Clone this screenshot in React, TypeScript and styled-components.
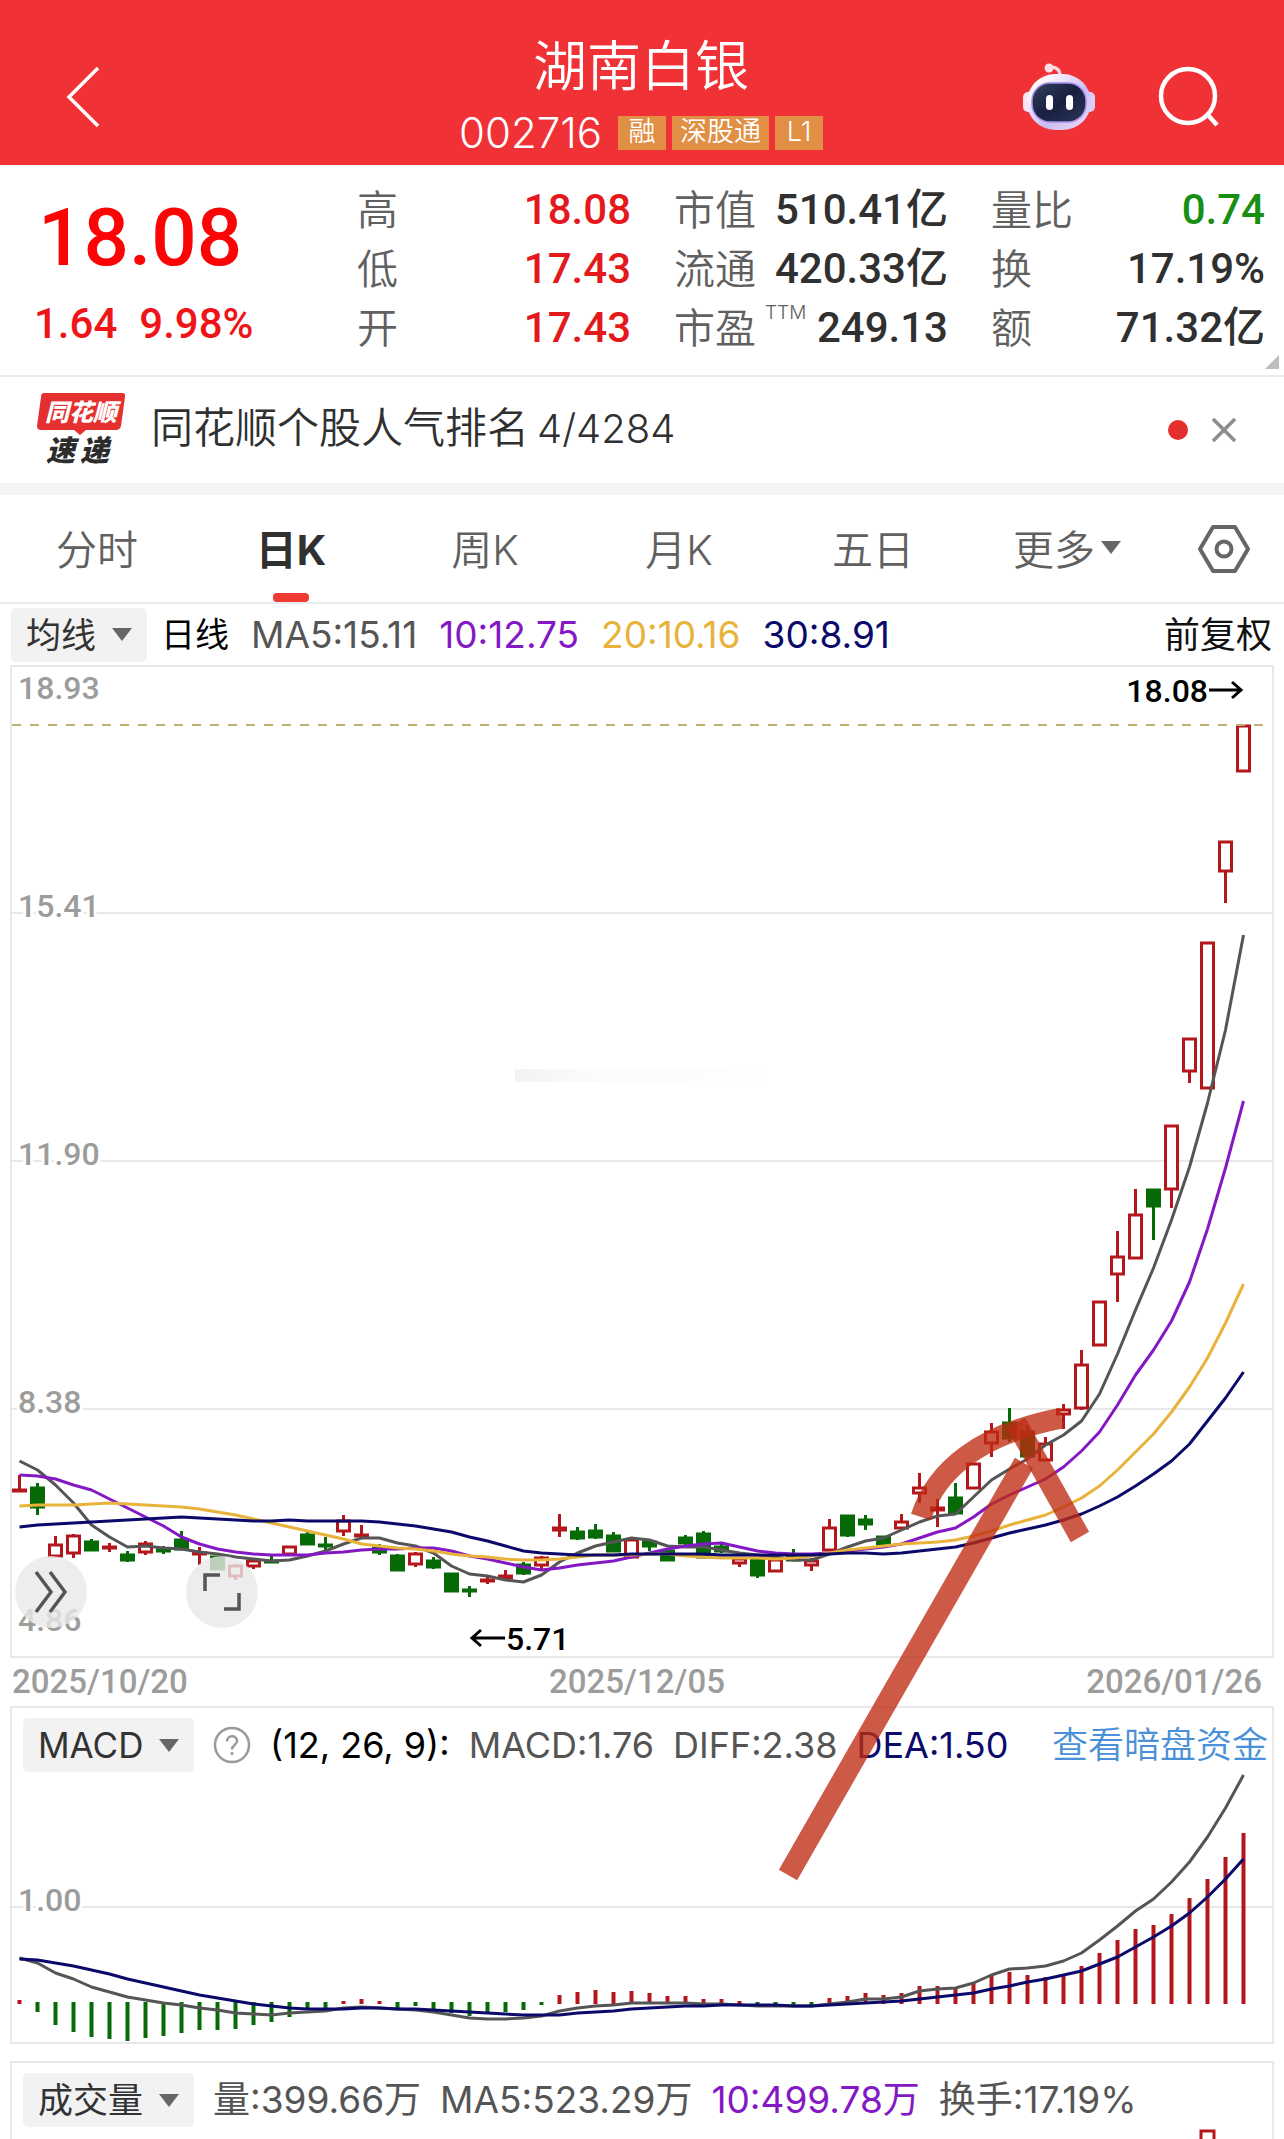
import React from "react";
import styled, { createGlobalStyle } from "styled-components";

const RED = "#b3171b";
const GREEN = "#066a06";
const NAVY = "#0b0a6b";
const PURPLE = "#8418c4";
const AMBER = "#e8b33a";
const GRAY = "#555555";

const DIGITS = 'Roboto, "Noto Sans CJK SC", sans-serif';
const UI = 'Inter, "Noto Sans CJK SC", sans-serif';

const Global = createGlobalStyle`
  * { box-sizing: border-box; }
  body { margin: 0; background: #fff; color: #333; font-family: ${UI}; }
  button, select { font: inherit; color: inherit; border: 0; background: none; padding: 0; margin: 0; cursor: pointer; }
  svg { display: block; }
`;

const Page = styled.main`
  width: 100%;
  overflow: hidden;
`;

/* ---------- header ---------- */
const Header = styled.header`
  display: grid;
  grid-template-columns: 1fr auto 1fr;
  align-items: center;
  height: 165px;
  padding: 28px 62px 0 60px;
  background: #f03237;
  color: #fff;
`;
const HeaderCenter = styled.div`
  display: flex;
  flex-direction: column;
  align-items: center;
`;
const StockName = styled.h1`
  margin: 0;
  font-size: 54px;
  line-height: 72px;
  font-weight: 350;
`;
const CodeRow = styled.div`
  display: flex;
  align-items: center;
  gap: 6px;
  height: 60px;
  font-size: 42px;
  font-weight: 300;
`;
const Code = styled.span`
  margin-right: 10px;
`;
const Tag = styled.span`
  min-width: 48px;
  padding: 0 8px;
  height: 34px;
  line-height: 32px;
  font-size: 27px;
  font-weight: 350;
  text-align: center;
  background: #e08f45;
`;
const HeaderActions = styled.div`
  display: flex;
  justify-content: flex-end;
  align-items: center;
  gap: 60px;
`;
const IconButton = styled.button`
  display: inline-flex;
  align-items: center;
  justify-content: center;
  justify-self: start;
`;

/* ---------- quote summary ---------- */
const Quote = styled.section`
  position: relative;
  display: grid;
  grid-template-columns: 314px 1fr 1fr 1fr;
  column-gap: 43px;
  height: 212px;
  padding: 15px 19px 0 0;
  border-bottom: 2px solid #ececec;
`;
const PriceBlock = styled.div`
  padding-left: 34px;
  color: #fb0406;
  font-family: ${DIGITS};
  font-weight: 500;
  white-space: nowrap;
`;
const Price = styled.div`
  margin-top: 11px;
  padding-left: 4px;
  font-size: 80px;
  line-height: 94px;
`;
const Change = styled.div`
  display: flex;
  gap: 22px;
  margin-top: 14px;
  font-size: 42px;
  line-height: 50px;
  color: #ef1418;
`;
const Stats = styled.dl`
  margin: 0;
`;
const Stat = styled.div`
  display: flex;
  align-items: center;
  justify-content: space-between;
  height: 59px;
  white-space: nowrap;
`;
const StatLabel = styled.dt`
  display: flex;
  font-size: 41px;
  font-weight: 350;
  line-height: 56px;
  color: #606060;
`;
const Superscript = styled.sup`
  margin-left: 9px;
  font-size: 19px;
  line-height: 26px;
`;
const StatValue = styled.dd<{ $tone?: string }>`
  margin: 0;
  font-family: ${DIGITS};
  font-size: 42px;
  font-weight: 500;
  line-height: 56px;
  color: ${(p) => p.$tone ?? "#303030"};
`;
const Corner = styled.span`
  position: absolute;
  right: 5px;
  bottom: 6px;
  border-style: solid;
  border-width: 0 0 14px 14px;
  border-color: transparent transparent #bdbdbd transparent;
`;

/* ---------- notice ---------- */
const Notice = styled.section`
  display: flex;
  align-items: center;
  height: 106px;
  padding: 0 46px 0 36px;
`;
const NoticeText = styled.a`
  flex: 1;
  margin-left: 25px;
  padding-bottom: 4px;
  font-size: 42px;
  line-height: 60px;
  font-weight: 350;
  color: #303030;
  text-decoration: none;
`;
const Rank = styled.span`
  margin-left: 8px;
  font-size: 40px;
`;
const Dot = styled.span`
  width: 20px;
  height: 20px;
  margin-right: 22px;
  border-radius: 50%;
  background: #e52e2e;
`;
const Band = styled.div`
  height: 12px;
  background: #f4f4f4;
`;

/* ---------- period tabs ---------- */
const Tabs = styled.nav`
  display: flex;
  height: 109px;
  border-bottom: 2px solid #ececec;
`;
const Tab = styled.button<{ $active?: boolean }>`
  position: relative;
  flex: 1;
  display: flex;
  align-items: center;
  justify-content: center;
  gap: 6px;
  padding-bottom: 3px;
  font-size: 41px;
  font-weight: ${(p) => (p.$active ? 700 : 350)};
  color: ${(p) => (p.$active ? "#303030" : "#606060")};
  &::after {
    content: "";
    display: ${(p) => (p.$active ? "block" : "none")};
    position: absolute;
    bottom: 0;
    left: 50%;
    width: 36px;
    height: 9px;
    margin-left: -18px;
    border-radius: 4px;
    background: #f03a33;
  }
`;
const SettingsButton = styled(IconButton)`
  width: 120px;
`;
const Caret = styled.span`
  border-style: solid;
  border-width: 13px 10px 0;
  border-color: #666 transparent transparent;
`;

/* ---------- indicator rows ---------- */
const Legend = styled.div`
  display: flex;
  align-items: center;
  line-height: 54px;
  white-space: nowrap;
`;
const MaLegend = styled(Legend)`
  gap: 22px;
  height: 61px;
  padding: 0 12px 0 11px;
  font-size: 37px;
`;
const PanelLegend = styled(Legend)`
  gap: 19px;
  padding: 10px 4px 0 11px;
  font-size: 36px;
`;
const VolumeLegend = styled(PanelLegend)`
  font-size: 37px;
`;
const Item = styled.span<{ $color?: string }>`
  color: ${(p) => p.$color ?? GRAY};
`;
const DayLine = styled(Item)`
  margin-left: -8px;
  font-size: 34px;
`;
const Adjust = styled.button`
  margin-left: auto;
  font-size: 36px;
  color: #111;
`;
const HiddenFundsLink = styled.a`
  margin-left: auto;
  font-size: 36px;
  font-weight: 350;
  color: #4a90d9;
  text-decoration: none;
`;
const Picker = styled.label`
  position: relative;
  display: inline-flex;
  align-items: center;
  height: 54px;
  border-radius: 5px;
  background: #f2f2f2;
`;
const PickerSelect = styled.select`
  appearance: none;
  height: 54px;
  padding: 0 50px 0 15px;
  font-size: 35px;
  color: #333;
  outline: none;
`;
const PickerCaret = styled(Caret)`
  position: absolute;
  right: 15px;
  pointer-events: none;
`;

/* ---------- charts ---------- */
const Charts = styled.section`
  position: relative;
  margin: 0 10px;
`;
const Panel = styled.div<{ $open?: boolean }>`
  position: relative;
  border: 2px solid #e8e8e8;
  border-bottom-width: ${(p) => (p.$open ? 0 : 2)}px;
`;
const Plot = styled.svg`
  width: 100%;
  height: auto;
  overflow: visible;
`;
const AxisText = styled.text`
  font-family: ${DIGITS};
  font-size: 32px;
  font-weight: 500;
  fill: #9c9c9c;
  stroke: #fff;
  stroke-width: 6px;
  paint-order: stroke;
`;
const MarkText = styled.text`
  font-family: ${DIGITS};
  font-size: 32px;
  font-weight: 500;
  fill: #000;
`;
const Dates = styled.div`
  display: flex;
  justify-content: space-between;
  padding: 0 12px 0 2px;
  font-family: ${DIGITS};
  font-size: 33px;
  font-weight: 500;
  line-height: 47px;
  height: 48px;
  color: #9c9c9c;
`;
const FloatButton = styled.button<{ $left: number }>`
  position: absolute;
  left: ${(p) => p.$left}px;
  bottom: 28px;
  display: flex;
  align-items: center;
  justify-content: center;
  width: 72px;
  height: 72px;
  border-radius: 50%;
  background: rgba(232, 232, 232, 0.8);
`;
const Drawing = styled.svg`
  position: absolute;
  inset: 0;
  width: 100%;
  height: 100%;
  pointer-events: none;
`;
const VolumePanel = styled(Panel)`
  margin: 17px 10px 0;
`;

/* ---------- data ---------- */
type Candle = [up: 0 | 1, high: number, top: number, bottom: number, low: number];
const candles: Candle[] = [
  [1, 1475, 1489, 1490, 1490], [0, 1483, 1487, 1507, 1515], [1, 1536, 1544, 1556, 1556],
  [1, 1534, 1535, 1553, 1558], [0, 1539, 1541, 1550, 1551], [1, 1543, 1546, 1548, 1552],
  [0, 1551, 1554, 1560, 1562], [1, 1541, 1543, 1552, 1555], [0, 1546, 1548, 1551, 1554],
  [0, 1531, 1539, 1549, 1549], [1, 1547, 1552, 1554, 1565], [0, 1556, 1556, 1569, 1569],
  [1, 1564, 1565, 1576, 1580], [1, 1558, 1560, 1566, 1569], [0, 1556, 1560, 1561, 1563],
  [1, 1546, 1546, 1554, 1554], [0, 1532, 1534, 1544, 1545], [0, 1537, 1544, 1546, 1554],
  [1, 1515, 1520, 1531, 1536], [1, 1525, 1534, 1536, 1537], [0, 1544, 1547, 1552, 1555],
  [0, 1554, 1555, 1570, 1571], [1, 1552, 1553, 1564, 1567], [0, 1557, 1560, 1567, 1569],
  [0, 1573, 1573, 1591, 1591], [0, 1586, 1589, 1591, 1597], [1, 1575, 1579, 1581, 1584],
  [1, 1570, 1575, 1578, 1581], [0, 1562, 1564, 1573, 1575], [1, 1556, 1557, 1565, 1569],
  [1, 1514, 1527, 1530, 1537], [0, 1527, 1531, 1538, 1540], [0, 1524, 1530, 1537, 1539],
  [0, 1532, 1535, 1551, 1552], [1, 1539, 1539, 1557, 1557], [0, 1540, 1541, 1546, 1551],
  [0, 1548, 1550, 1560, 1561], [0, 1535, 1537, 1543, 1546], [0, 1531, 1533, 1557, 1557],
  [0, 1542, 1546, 1551, 1553], [1, 1557, 1558, 1563, 1567], [0, 1557, 1559, 1575, 1578],
  [1, 1559, 1559, 1571, 1571], [0, 1549, 1556, 1560, 1561], [1, 1558, 1560, 1565, 1571],
  [1, 1519, 1527, 1550, 1550], [0, 1515, 1515, 1535, 1537], [0, 1515, 1519, 1524, 1530],
  [0, 1536, 1536, 1544, 1545], [1, 1514, 1521, 1528, 1529], [1, 1473, 1487, 1493, 1503],
  [1, 1499, 1507, 1510, 1527], [0, 1483, 1497, 1513, 1513], [1, 1463, 1463, 1488, 1488],
  [1, 1423, 1431, 1443, 1457], [0, 1408, 1422, 1438, 1442], [0, 1425, 1431, 1456, 1456],
  [1, 1437, 1443, 1460, 1461], [1, 1404, 1409, 1414, 1429], [1, 1350, 1364, 1408, 1410],
  [1, 1301, 1301, 1345, 1345], [1, 1231, 1256, 1274, 1302], [1, 1189, 1214, 1258, 1258],
  [0, 1189, 1189, 1206, 1240], [1, 1125, 1125, 1189, 1208], [1, 1038, 1038, 1071, 1083],
  [1, 942, 942, 1088, 1088], [1, 841, 841, 871, 903], [1, 725, 725, 771, 771],
];

const ma5 = [
  1461, 1470, 1485, 1503, 1525, 1537, 1547, 1546, 1548, 1549, 1552, 1554, 1557, 1559, 1561, 1560, 1556, 1551, 1544, 1538,
  1538, 1543, 1546, 1553, 1566, 1574, 1576, 1580, 1582, 1575, 1562, 1553, 1546, 1542, 1538, 1540, 1546, 1547, 1547, 1550,
  1553, 1555, 1557, 1560, 1560, 1554, 1547, 1541, 1538, 1530, 1522, 1516, 1514, 1497, 1480, 1469, 1459, 1445, 1435, 1421,
  1394, 1354, 1310, 1268, 1220, 1167, 1103, 1030, 935,
];
const ma10 = [
  1475, 1476, 1479, 1485, 1490, 1499, 1508, 1517, 1526, 1537, 1544, 1549, 1552, 1554, 1555, 1555, 1555, 1553, 1552, 1550,
  1549, 1549, 1548, 1548, 1551, 1556, 1559, 1563, 1567, 1570, 1568, 1565, 1563, 1561, 1557, 1553, 1549, 1546, 1544, 1543,
  1547, 1551, 1553, 1554, 1554, 1553, 1551, 1549, 1547, 1544, 1538, 1532, 1528, 1517, 1504, 1495, 1487, 1479, 1467, 1451,
  1432, 1405, 1375, 1350, 1321, 1282, 1229, 1168, 1101,
];
const ma20 = [
  1506, 1505, 1505, 1505, 1504, 1503, 1504, 1505, 1506, 1507, 1509, 1512, 1515, 1519, 1523, 1527, 1531, 1535, 1539, 1544,
  1546, 1548, 1549, 1551, 1554, 1556, 1557, 1559, 1560, 1560, 1559, 1557, 1555, 1555, 1555, 1554, 1554, 1556, 1557, 1558,
  1558, 1558, 1559, 1558, 1556, 1553, 1550, 1548, 1546, 1544, 1543, 1542, 1540, 1536, 1531, 1525, 1520, 1515, 1507, 1498,
  1486, 1470, 1452, 1434, 1412, 1387, 1358, 1323, 1284,
];
const ma30 = [
  1527, 1525, 1524, 1523, 1522, 1521, 1520, 1519, 1518, 1517, 1518, 1519, 1520, 1521, 1521, 1520, 1521, 1521, 1521, 1521,
  1522, 1524, 1526, 1529, 1532, 1537, 1541, 1546, 1551, 1553, 1554, 1555, 1555, 1555, 1554, 1554, 1554, 1554, 1554, 1555,
  1555, 1555, 1555, 1555, 1555, 1554, 1553, 1553, 1554, 1553, 1551, 1549, 1547, 1543, 1538, 1533, 1529, 1525, 1520, 1514,
  1506, 1497, 1486, 1474, 1461, 1444, 1421, 1398, 1372,
];
const macdBars = [
  2000, 2012, 2025, 2032, 2037, 2039, 2041, 2038, 2036, 2033, 2030, 2030, 2029, 2025, 2022, 2017, 2010, 2010, 2001, 1999,
  2001, 2010, 2006, 2010, 2013, 2016, 2013, 2012, 2010, 2005, 1995, 1992, 1990, 1992, 1991, 1993, 1996, 1996, 1999, 1999,
  2001, 2005, 2006, 2007, 2006, 1998, 1996, 1993, 1995, 1993, 1986, 1986, 1989, 1983, 1974, 1972, 1975, 1977, 1975, 1966,
  1953, 1940, 1929, 1925, 1914, 1898, 1879, 1857, 1833,
];
const diff = [
  1958, 1963, 1973, 1979, 1987, 1992, 1997, 2000, 2003, 2005, 2008, 2010, 2013, 2014, 2015, 2013, 2012, 2011, 2008, 2007,
  2008, 2009, 2010, 2012, 2015, 2018, 2019, 2019, 2018, 2016, 2011, 2008, 2006, 2005, 2003, 2003, 2003, 2003, 2004, 2004,
  2005, 2006, 2006, 2006, 2006, 2004, 2002, 1999, 1999, 1997, 1991, 1989, 1988, 1983, 1975, 1969, 1968, 1966, 1961, 1953,
  1940, 1926, 1911, 1899, 1882, 1862, 1837, 1808, 1775,
];
const dea = [
  1959, 1960, 1963, 1966, 1970, 1974, 1979, 1983, 1987, 1991, 1995, 1998, 2001, 2004, 2006, 2008, 2009, 2009, 2009, 2008,
  2008, 2009, 2009, 2010, 2011, 2012, 2013, 2014, 2015, 2015, 2015, 2013, 2012, 2011, 2009, 2008, 2007, 2006, 2006, 2005,
  2005, 2005, 2005, 2006, 2006, 2005, 2004, 2003, 2002, 2001, 1999, 1997, 1995, 1993, 1989, 1986, 1982, 1979, 1975, 1971,
  1964, 1957, 1947, 1937, 1926, 1913, 1897, 1879, 1859,
];

const xAt = (i: number) => 19.5 + 18 * i;
const toPoints = (ys: number[]) => ys.map((y, i) => `${xAt(i)},${y}`).join(" ");

function Line({ ys, color }: { ys: number[]; color: string }) {
  return <polyline points={toPoints(ys)} fill="none" stroke={color} strokeWidth={3} strokeLinejoin="round" />;
}

function CandleMark({ data, x }: { data: Candle; x: number }) {
  const [up, high, top, bottom, low] = data;
  const color = up ? RED : GREEN;
  return (
    <g stroke={color} strokeWidth={3}>
      {high < top && <line x1={x} x2={x} y1={high} y2={top} />}
      {low > bottom && <line x1={x} x2={x} y1={bottom} y2={low} />}
      <rect x={x - 6} y={top + 1} width={12} height={Math.max(bottom - top - 1, 1)} fill={up ? "#fff" : GREEN} />
    </g>
  );
}

const gridLines = [
  { y: 913, label: "15.41" },
  { y: 1161, label: "11.90" },
  { y: 1409, label: "8.38" },
];

function KLineChart() {
  return (
    <Plot viewBox="12 667 1260 989" role="img" aria-label="日K线图">
      <defs>
        <linearGradient id="smudge">
          <stop offset="0" stopColor="#f3f3f3" />
          <stop offset="0.3" stopColor="#fbfbfb" />
          <stop offset="1" stopColor="#fefefe" />
        </linearGradient>
      </defs>
      <rect x="515" y="1069" width="250" height="13" fill="url(#smudge)" />
      {gridLines.map((g) => (
        <line key={g.y} x1="12" x2="1272" y1={g.y} y2={g.y} stroke="#e8e8e8" strokeWidth="2" />
      ))}
      {candles.map((c, i) => (
        <CandleMark key={i} data={c} x={xAt(i)} />
      ))}
      <line x1="12" x2="1272" y1="725" y2="725" stroke="#c0b070" strokeWidth="2" strokeDasharray="9 9" />
      <Line ys={ma5} color={GRAY} />
      <Line ys={ma10} color={PURPLE} />
      <Line ys={ma20} color={AMBER} />
      <Line ys={ma30} color={NAVY} />
      <AxisText x="18" y="699">18.93</AxisText>
      {gridLines.map((g) => (
        <AxisText key={g.y} x="18" y={g.y + 4}>{g.label}</AxisText>
      ))}
      <AxisText x="18" y="1631">4.86</AxisText>
      <MarkText x="1208" y="702" textAnchor="end">18.08</MarkText>
      <path d="M1209 690h32m-9-8l9 8-9 8" fill="none" stroke="#000" strokeWidth="3" />
      <MarkText x="506" y="1650">5.71</MarkText>
      <path d="M505 1638h-33m9-8l-9 8 9 8" fill="none" stroke="#000" strokeWidth="3" />
    </Plot>
  );
}

function MacdChart() {
  return (
    <Plot viewBox="12 1772 1260 270" role="img" aria-label="MACD">
      <line x1="12" x2="1272" y1="1907" y2="1907" stroke="#e8e8e8" strokeWidth="2" />
      {macdBars.map((y, i) => (
        <line key={i} x1={xAt(i)} x2={xAt(i)} y1={y < 2003 ? 2004 : 2002} y2={y} stroke={y < 2003 ? RED : GREEN} strokeWidth="4" />
      ))}
      <Line ys={diff} color={GRAY} />
      <Line ys={dea} color={NAVY} />
      <AxisText x="18" y="1911">1.00</AxisText>
    </Plot>
  );
}

function RobotIcon() {
  return (
    <svg width="74" height="68" viewBox="0 0 74 68" aria-hidden="true">
      <defs>
        <linearGradient id="shell" x1="0" y1="0" x2="1" y2="1">
          <stop offset="0.2" stopColor="#fdf5fb" />
          <stop offset="0.6" stopColor="#c9bdf6" />
          <stop offset="1" stopColor="#f3dcf4" />
        </linearGradient>
        <linearGradient id="visor" x1="0" y1="0" x2="1" y2="1">
          <stop offset="0" stopColor="#35425f" />
          <stop offset="0.5" stopColor="#17203f" />
          <stop offset="1" stopColor="#2b3558" />
        </linearGradient>
      </defs>
      <path d="M27 5c6-2 11 1 11 8" fill="none" stroke="#fbd9e2" strokeWidth="3.5" />
      <circle cx="27" cy="5" r="4.5" fill="#fbdfe6" />
      <rect x="1" y="29" width="12" height="20" rx="5" fill="#f6e3f3" />
      <rect x="61" y="29" width="12" height="20" rx="5" fill="#dccff5" />
      <rect x="5" y="11" width="64" height="56" rx="28" fill="url(#shell)" />
      <rect x="10" y="20" width="54" height="39" rx="18" fill="url(#visor)" stroke="#a78bea" strokeWidth="1.5" />
      <rect x="24" y="32" width="7" height="15" rx="3.5" fill="#fff" />
      <rect x="44" y="32" width="7" height="15" rx="3.5" fill="#fff" />
    </svg>
  );
}

const Logo = styled.svg`
  overflow: visible;
`;
const LogoText = styled.text`
  font-family: "Noto Sans CJK SC", sans-serif;
  font-style: italic;
  font-weight: 900;
`;

function ExpressLogo() {
  return (
    <Logo width="90" height="76" viewBox="0 0 90 76" role="img" aria-label="同花顺速递">
      <path d="M8 1H86Q90 1 89 5L85 34Q84 38 80 38H50L44 43L38 38H5Q1 38 1 34L5 5Q5 1 8 1Z" fill="#e4302f" />
      <LogoText x="9" y="29" fontSize="24" fill="#fff">同花顺</LogoText>
      <LogoText x="10" y="69" fontSize="29" fill="#2c2c2c">速</LogoText>
      <LogoText x="44" y="69" fontSize="29" fill="#2c2c2c">递</LogoText>
    </Logo>
  );
}

function IndicatorPicker({ id, name, value }: { id: string; name: string; value: string }) {
  return (
    <Picker htmlFor={id}>
      <PickerSelect id={id} aria-label={name} defaultValue={value}>
        <option value={value}>{value}</option>
      </PickerSelect>
      <PickerCaret />
    </Picker>
  );
}

const statColumns = [
  [
    { label: "高", value: "18.08", tone: "#e3191c" },
    { label: "低", value: "17.43", tone: "#e3191c" },
    { label: "开", value: "17.43", tone: "#e3191c" },
  ],
  [
    { label: "市值", value: "510.41亿" },
    { label: "流通", value: "420.33亿" },
    { label: "市盈", sup: "TTM", value: "249.13" },
  ],
  [
    { label: "量比", value: "0.74", tone: "#178f13" },
    { label: "换", value: "17.19%" },
    { label: "额", value: "71.32亿" },
  ],
] as { label: string; value: string; tone?: string; sup?: string }[][];

const periods = ["分时", "日K", "周K", "月K", "五日"];

export default function App() {
  return (
    <Page>
      <Global />
      <Header>
        <IconButton aria-label="返回">
          <svg width="44" height="64" viewBox="0 0 44 64" fill="none" stroke="#fff" strokeWidth="3.5">
            <path d="M38 3L9 32l29 29" />
          </svg>
        </IconButton>
        <HeaderCenter>
          <StockName>湖南白银</StockName>
          <CodeRow>
            <Code>002716</Code>
            <Tag>融</Tag>
            <Tag>深股通</Tag>
            <Tag>L1</Tag>
          </CodeRow>
        </HeaderCenter>
        <HeaderActions>
          <IconButton aria-label="智能助手">
            <RobotIcon />
          </IconButton>
          <IconButton aria-label="搜索">
            <svg width="66" height="62" viewBox="0 0 66 62" fill="none" stroke="#fff" strokeWidth="4.5">
              <circle cx="32" cy="30" r="27" />
              <path d="M51 48l10 11" />
            </svg>
          </IconButton>
        </HeaderActions>
      </Header>

      <Quote>
        <PriceBlock>
          <Price>18.08</Price>
          <Change>
            <span>1.64</span>
            <span>9.98%</span>
          </Change>
        </PriceBlock>
        {statColumns.map((column, i) => (
          <Stats key={i}>
            {column.map((s) => (
              <Stat key={s.label}>
                <StatLabel>
                  {s.label}
                  {s.sup && <Superscript>{s.sup}</Superscript>}
                </StatLabel>
                <StatValue $tone={s.tone}>{s.value}</StatValue>
              </Stat>
            ))}
          </Stats>
        ))}
        <Corner />
      </Quote>

      <Notice>
        <ExpressLogo />
        <NoticeText href="#rank">
          同花顺个股人气排名<Rank>4/4284</Rank>
        </NoticeText>
        <Dot />
        <IconButton aria-label="关闭">
          <svg width="28" height="28" viewBox="0 0 28 28" stroke="#8c8c8c" strokeWidth="3.5">
            <path d="M3 3l22 22M25 3L3 25" />
          </svg>
        </IconButton>
      </Notice>
      <Band />

      <Tabs>
        {periods.map((p) => (
          <Tab key={p} $active={p === "日K"}>{p}</Tab>
        ))}
        <Tab>
          更多
          <Caret />
        </Tab>
        <SettingsButton aria-label="设置">
          <svg width="52" height="48" viewBox="0 0 52 48" fill="none" stroke="#666" strokeWidth="4">
            <path d="M15 2H37L50 24L37 46H15L2 24Z" strokeLinejoin="round" />
            <circle cx="26" cy="24" r="7.5" />
          </svg>
        </SettingsButton>
      </Tabs>

      <MaLegend>
        <IndicatorPicker id="overlay" name="主图指标" value="均线" />
        <DayLine $color="#000">日线</DayLine>
        <Item>MA5:15.11</Item>
        <Item $color={PURPLE}>10:12.75</Item>
        <Item $color={AMBER}>20:10.16</Item>
        <Item $color={NAVY}>30:8.91</Item>
        <Adjust>前复权</Adjust>
      </MaLegend>

      <Charts>
        <Panel>
          <KLineChart />
          <FloatButton $left={3} aria-label="展开">
            <svg width="36" height="44" viewBox="0 0 36 44" fill="none" stroke="#555" strokeWidth="3.5">
              <path d="M3 2l15 20L3 42M17 2l15 20-15 20" />
            </svg>
          </FloatButton>
          <FloatButton $left={174} aria-label="全屏">
            <svg width="38" height="38" viewBox="0 0 38 38" fill="none" stroke="#555" strokeWidth="3.5">
              <path d="M2 18V2h15M36 20v16H21" />
            </svg>
          </FloatButton>
        </Panel>
        <Dates>
          <span>2025/10/20</span>
          <span>2025/12/05</span>
          <span>2026/01/26</span>
        </Dates>
        <Panel>
          <PanelLegend>
            <IndicatorPicker id="sub" name="副图指标" value="MACD" />
            <IconButton aria-label="指标说明">
              <svg width="38" height="38" viewBox="0 0 38 38" fill="none" stroke="#999" strokeWidth="2.5">
                <circle cx="19" cy="19" r="17" />
                <path d="M14 15.500c0-7 10-7 10-.5 0 4-5 4-5 8.500M19 26v3" />
              </svg>
            </IconButton>
            <Item $color="#000">(12, 26, 9):</Item>
            <Item>MACD:1.76</Item>
            <Item>DIFF:2.38</Item>
            <Item $color={NAVY}>DEA:1.50</Item>
            <HiddenFundsLink href="#funds">查看暗盘资金</HiddenFundsLink>
          </PanelLegend>
          <MacdChart />
        </Panel>
        <Drawing viewBox="10 665 1264 1379" aria-hidden="true">
          <g fill="none" stroke="#bf2c12" strokeOpacity="0.78" strokeWidth="21">
            <path d="M788 1875L1024 1463" />
            <path d="M921 1517C936 1470 980 1434 1062 1418" />
            <path d="M1016 1423L1080 1537" />
          </g>
        </Drawing>
      </Charts>

      <VolumePanel $open>
        <VolumeLegend>
          <IndicatorPicker id="volume" name="成交量指标" value="成交量" />
          <Item>量:399.66万</Item>
          <Item>MA5:523.29万</Item>
          <Item $color={PURPLE}>10:499.78万</Item>
          <Item>换手:17.19%</Item>
        </VolumeLegend>
        <Plot viewBox="12 2127 1260 12" role="img" aria-label="成交量">
          <path d="M1201 2139V2131H1214V2139" fill="none" stroke={RED} strokeWidth="3" />
        </Plot>
      </VolumePanel>
    </Page>
  );
}
